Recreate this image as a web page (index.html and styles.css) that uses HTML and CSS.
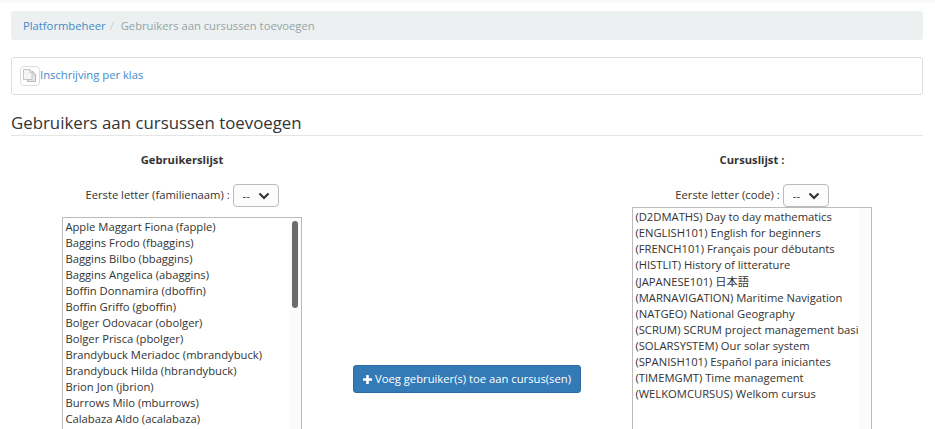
FILE: index.html
```html
<!DOCTYPE html>
<html lang="nl">
<head>
<meta charset="utf-8">
<title>Gebruikers aan cursussen toevoegen</title>
<link rel="stylesheet" href="styles.css">
</head>
<body>
<main class="page">
  <nav class="breadcrumb"><a href="#">Platformbeheer</a><span class="slash">/</span><span>Gebruikers aan cursussen toevoegen</span></nav>
  <div class="actions">
    <a href="#"><span class="icon-box"><svg width="14" height="14" viewBox="0 0 14 14">
      <path d="M4.500 2.500h5.500l2.500 3v7h-8z" fill="#e8e8e8" stroke="#b5b5b5"/>
      <path d="M.5.5h6.500l2 2.500v7.500H.5z" fill="#f5f5f5" stroke="#c4c4c4"/>
      <path d="M6.500.5v3H9M10 3v3h2.500" fill="none" stroke="#ccc"/>
    </svg></span><span>Inschrijving per klas</span></a>
  </div>
  <h1>Gebruikers aan cursussen toevoegen</h1>
  <div class="columns">
    <section class="column">
      <h2>Gebruikerslijst</h2>
      <div class="filter"><span>Eerste letter (familienaam) :</span><button class="select">--<svg width="12" height="8" viewBox="0 0 12 8"><path d="M1.500 1.500 6 6l4.500-4.500"/></svg></button></div>
      <ul class="list users">
        <li>Apple Maggart Fiona (fapple)</li>
        <li>Baggins Frodo (fbaggins)</li>
        <li>Baggins Bilbo (bbaggins)</li>
        <li>Baggins Angelica (abaggins)</li>
        <li>Boffin Donnamira (dboffin)</li>
        <li>Boffin Griffo (gboffin)</li>
        <li>Bolger Odovacar (obolger)</li>
        <li>Bolger Prisca (pbolger)</li>
        <li>Brandybuck Meriadoc (mbrandybuck)</li>
        <li>Brandybuck Hilda (hbrandybuck)</li>
        <li>Brion Jon (jbrion)</li>
        <li>Burrows Milo (mburrows)</li>
        <li>Calabaza Aldo (acalabaza)</li>
      </ul>
    </section>
    <div class="middle">
      <button class="add"><svg width="9" height="9" viewBox="0 0 9 9"><path d="M3.200 0h2.600v3.200H9v2.600H5.800V9H3.200V5.800H0V3.200h3.200z"/></svg>Voeg gebruiker(s) toe aan cursus(sen)</button>
    </div>
    <section class="column">
      <h2>Cursuslijst :</h2>
      <div class="filter"><span>Eerste letter (code) :</span><button class="select">--<svg width="12" height="8" viewBox="0 0 12 8"><path d="M1.500 1.500 6 6l4.500-4.500"/></svg></button></div>
      <ul class="list courses">
        <li>(D2DMATHS) Day to day mathematics</li>
        <li>(ENGLISH101) English for beginners</li>
        <li>(FRENCH101) Français pour débutants</li>
        <li>(HISTLIT) History of litterature</li>
        <li class="cjk">(JAPANESE101) 日本語</li>
        <li>(MARNAVIGATION) Maritime Navigation</li>
        <li>(NATGEO) National Geography</li>
        <li>(SCRUM) SCRUM project management basi</li>
        <li>(SOLARSYSTEM) Our solar system</li>
        <li>(SPANISH101) Español para iniciantes</li>
        <li>(TIMEMGMT) Time management</li>
        <li>(WELKOMCURSUS) Welkom cursus</li>
      </ul>
    </section>
  </div>
</main>
</body>
</html>
```
FILE: styles.css
```css
* { box-sizing: border-box; }
body {
  margin: 0;
  height: 429px;
  background: linear-gradient(#f8f8f8, #fff 4px);
  color: #333;
  font: 11.24px/16px "Open Sans", "Noto Sans CJK JP", sans-serif;
}
a { color: #428bca; text-decoration: none; }
button { font: inherit; }
.page { width: 912px; margin-left: 11px; padding-top: 11px; }
.breadcrumb {
  display: flex;
  height: 29px;
  padding: 7px 12px;
  border-radius: 3px;
  background: #ecf0f1;
  color: #95a5a6;
}
.slash { width: 15px; padding-left: 4px; color: #ccc; }
.actions {
  height: 38px;
  margin-top: 17px;
  padding: 8px;
  border: 1px solid #ddd;
  border-radius: 3px;
}
.actions a { display: flex; line-height: 18px; }
.icon-box {
  display: flex;
  width: 20px;
  height: 20px;
  padding: 2px;
  border: 1px solid #ddd;
  border-radius: 4px;
}
h1 {
  height: 26px;
  margin: 15px 0 0;
  border-bottom: 1px solid #e5e5e5;
  font-size: 16.84px;
  font-weight: 400;
  line-height: 26px;
}
.columns { display: grid; grid-template-columns: 342px 228px 342px; }
.column { display: flex; flex-direction: column; align-items: center; }
h2 { margin: 16px 0; font-size: 11.2px; line-height: 16px; }
.filter { display: flex; gap: 3px; line-height: 22px; }
.select {
  display: flex;
  align-items: center;
  justify-content: space-between;
  width: 46px;
  height: 23px;
  padding: 0 8px 0 9px;
  border: 1px solid #bbb;
  border-radius: 4px;
  background: #fcfcfc;
  color: #333;
}
.select svg { fill: none; stroke: #333; stroke-width: 2.2; }
.list {
  position: relative;
  width: 240px;
  margin: 0;
  padding: 1px 2.4px;
  border: 1px solid #bbb;
  border-bottom: 0;
  background: linear-gradient(90deg, #fff 226px, #fbfbfb 226px);
  list-style: none;
  white-space: nowrap;
}
.users { height: 212px; margin-top: 10px; }
.courses { height: 222px; }
.users::after {
  content: "";
  position: absolute;
  top: 3px;
  right: 3px;
  width: 6px;
  height: 87px;
  border-radius: 3px;
  background: #6b6b6b;
}
.cjk { height: 17px; line-height: 17px; }
.middle { display: flex; align-items: flex-start; padding-top: 229px; }
.add {
  display: flex;
  align-items: center;
  justify-content: center;
  gap: 3px;
  width: 228px;
  height: 28px;
  padding: 0;
  border: 1px solid #2e6da4;
  border-radius: 3px;
  background: #337ab7;
  color: #fff;
  white-space: nowrap;
}
.add svg { fill: #fff; }
```
